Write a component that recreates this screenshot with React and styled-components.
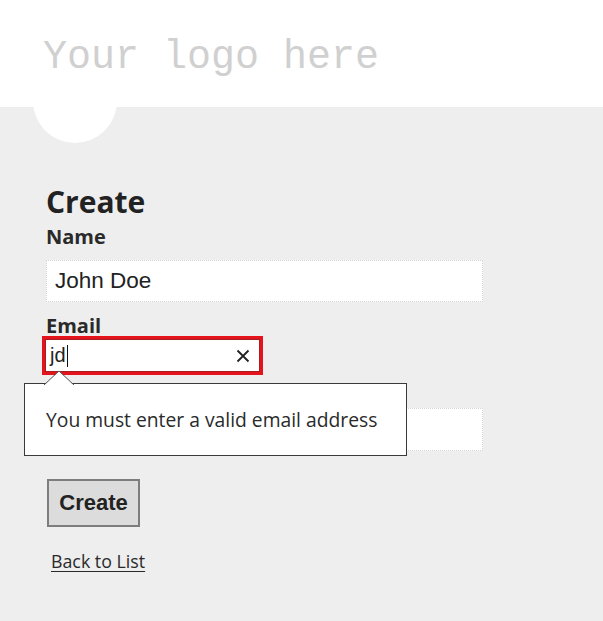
import React from "react";
import styled, { createGlobalStyle } from "styled-components";

const Global = createGlobalStyle`
  html, body { margin: 0; padding: 0; }
  body {
    background: #eeeeee;
    font-family: "Open Sans", "Noto Sans", sans-serif;
    color: #222;
    width: 603px;
    height: 621px;
    overflow: hidden;
  }
`;

const Header = styled.header`
  position: relative;
  height: 107px;
  background: #ffffff;
  display: flex;
  align-items: flex-start;
  padding-left: 43px;
  box-sizing: border-box;
`;

const Logo = styled.div`
  position: relative;
  z-index: 1;
  font-family: "Liberation Mono", "DejaVu Sans Mono", monospace;
  font-size: 40px;
  line-height: 40px;
  margin-top: 38px;
  color: #d0d0d0;
`;

const Bump = styled.div`
  position: absolute;
  z-index: 0;
  left: 33px;
  top: 59px;
  width: 84px;
  height: 84px;
  border-radius: 50%;
  background: #ffffff;
`;

const Main = styled.main`
  position: relative;
  padding: 77px 0 0 46px;
  display: flex;
  flex-direction: column;
  align-items: flex-start;
`;

const Title = styled.h2`
  margin: 0;
  font-size: 30px;
  line-height: 36px;
  font-weight: 700;
  color: #222;
`;

const Label = styled.label`
  display: block;
  font-size: 20px;
  line-height: 26px;
  font-weight: 700;
  color: #2a2a2a;
  margin-top: ${(p) => p.$mt || 0}px;
`;

const TextInput = styled.div`
  box-sizing: border-box;
  width: 437px;
  height: ${(p) => p.$h || 42}px;
  margin-top: ${(p) => p.$mt || 0}px;
  background: #ffffff;
  border: 1px dotted #d4d4d4;
  font-family: "Liberation Sans", Arial, sans-serif;
  font-size: 22.5px;
  color: #222;
  display: flex;
  align-items: center;
  padding-left: 8px;
`;

const FieldWrap = styled.div`
  position: relative;
  margin-top: -3px;
`;

const ErrorBox = styled.div`
  box-sizing: border-box;
  width: 221px;
  height: 39px;
  margin-left: -4px;
  border: 3px solid #e5141c;
  box-shadow: inset 0 0 0 1px #a61d22;
  background: #ffffff;
  display: flex;
  align-items: center;
  padding: 0 10px 0 5px;
  font-family: "Liberation Sans", Arial, sans-serif;
  font-size: 20px;
  color: #222;
`;

const Caret = styled.span`
  display: inline-block;
  width: 1px;
  height: 22px;
  background: #111;
  margin-left: 1px;
`;

const Clear = styled.span`
  margin-left: auto;
  display: flex;
  align-items: center;
`;

const Tooltip = styled.div`
  position: absolute;
  left: -22px;
  top: 47px;
  width: 383px;
  height: 73px;
  box-sizing: border-box;
  background: #ffffff;
  border: 1.5px solid #3a3a3a;
  display: flex;
  align-items: center;
  padding-left: 21px;
  font-size: 19.3px;
  color: #2a2a2a;
  z-index: 2;
`;

const Arrow = styled.svg`
  position: absolute;
  left: 18px;
  top: -14px;
`;

const Button = styled.button`
  margin-top: 28px;
  width: 93px;
  height: 48px;
  box-sizing: border-box;
  background: #dcdcdc;
  border: 2px solid #7d7d7d;
  font-family: "Liberation Sans", Arial, sans-serif;
  font-weight: 700;
  font-size: 22px;
  color: #222;
  padding: 0;
  margin-left: 1px;
`;

const BackLink = styled.a`
  margin-top: 22px;
  margin-left: 5px;
  font-size: 17.8px;
  line-height: 24px;
  color: #2a2a2a;
  text-decoration: underline;
  text-underline-offset: 3px;
`;

export default function App() {
  return (
    <>
      <Global />
      <Header>
        <Bump />
        <Logo>Your logo here</Logo>
      </Header>
      <Main>
        <Title>Create</Title>
        <Label $mt={4}>Name</Label>
        <TextInput $mt={10}>John Doe</TextInput>
        <Label $mt={11}>Email</Label>
        <FieldWrap>
          <ErrorBox>
            jd<Caret />
            <Clear>
              <svg width="14" height="14" viewBox="0 0 14 14">
                <path d="M1.5 1.5 L12.5 12.5 M12.5 1.5 L1.5 12.5" stroke="#222" strokeWidth="1.8" />
              </svg>
            </Clear>
          </ErrorBox>
          <Tooltip>
            <Arrow width="32" height="16" viewBox="0 0 32 16">
              <polygon points="1,15.5 16,1 31,15.5" fill="#ffffff" />
              <polyline points="1,15 16,1 31,15" fill="none" stroke="#555" strokeWidth="1" />
            </Arrow>
            You must enter a valid email address
          </Tooltip>
        </FieldWrap>
        <Label $mt={7}>Phone</Label>
        <TextInput $mt={0} $h={43}></TextInput>
        <Button>Create</Button>
        <BackLink href="#">Back to List</BackLink>
      </Main>
    </>
  );
}
